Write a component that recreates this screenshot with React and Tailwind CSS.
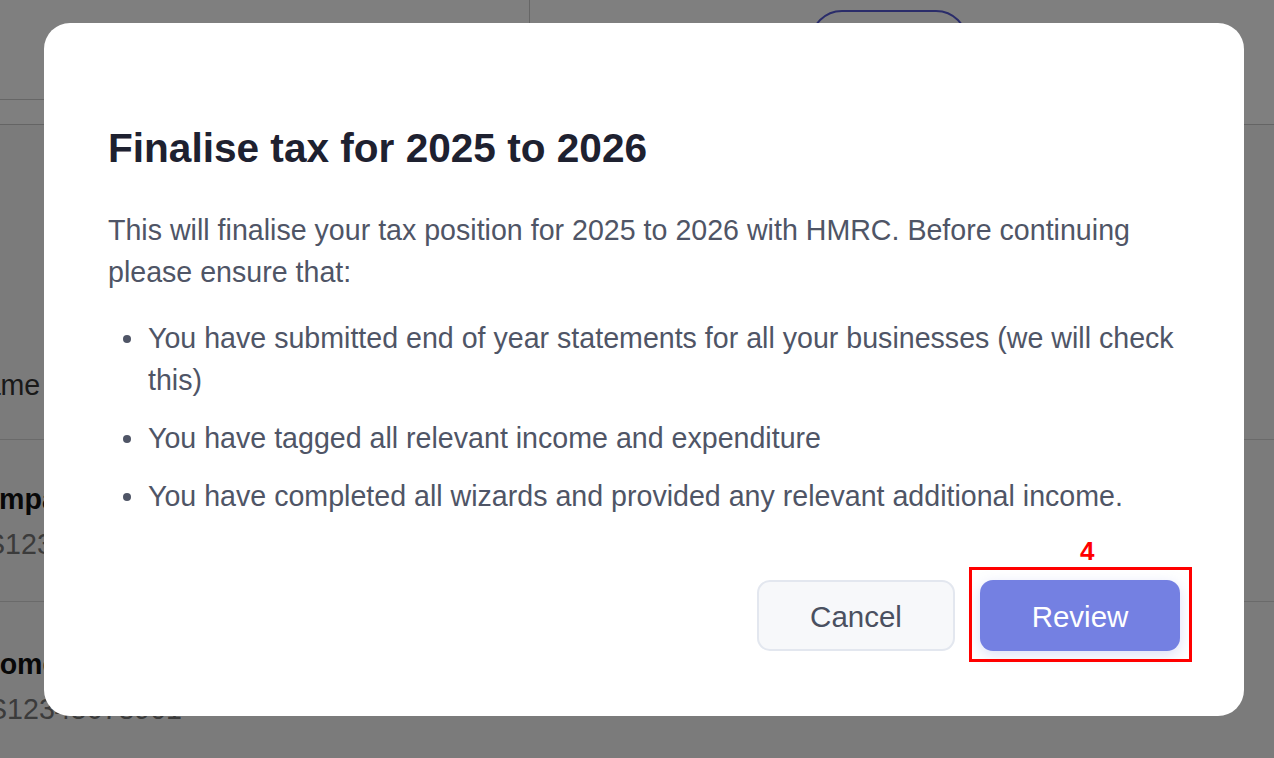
import React from "react";

const items = [
  "You have submitted end of year statements for all your businesses (we will check this)",
  "You have tagged all relevant income and expenditure",
  "You have completed all wizards and provided any relevant additional income.",
];

const App = () => {
  return (
    <div className="relative h-[758px] w-[1274px] overflow-hidden bg-[#f7f7f7] font-['Liberation_Sans',Arial,sans-serif]">
      {/* Page behind the dialog */}
      <div className="flex flex-col">
        <div className="flex h-[125px] flex-col border-b border-[#c9c9c9] bg-white">
          <div className="flex h-[100px]">
            <div className="w-[530px] border-r border-b border-[#cccccc]" />
            <div className="flex flex-1 items-start pt-[10px] pl-[280px]">
              <div className="h-[64px] w-[158px] rounded-[32px] border-2 border-[#5459d4]" />
            </div>
          </div>
        </div>
        <div className="flex h-[315px] items-end border-b border-[#d4d4d4] pb-[38px]">
          <span className="-ml-[36px] text-[28.6px] leading-[32px] text-[#333]">Name</span>
        </div>
        <div className="flex h-[162px] flex-col gap-[13px] border-b border-[#d4d4d4] pt-[43px]">
          <span className="-ml-[39px] text-[28.6px] leading-[32px] font-bold text-[#111]">Company Ltd</span>
          <span className="-ml-[14px] text-[28.6px] leading-[32px] text-[#777]">S12345678901</span>
        </div>
        <div className="flex flex-col gap-[13px] pt-[46px]">
          <span className="-ml-[21px] text-[28.6px] leading-[32px] font-bold text-[#111]">Home Services</span>
          <span className="-ml-[12px] text-[28.6px] leading-[32px] text-[#777]">S12345678901</span>
        </div>
      </div>

      {/* Overlay + dialog */}
      <div className="absolute inset-0 bg-black/50">
        <div className="ml-[44px] mt-[23px] flex h-[693px] w-[1200px] flex-col rounded-[26px] bg-white px-[64px] pt-[99px] pb-[65px]">
          <h2 className="text-[40.6px] leading-[52px] font-bold text-[#1e2130]">
            Finalise tax for 2025 to 2026
          </h2>
          <p className="mt-[35px] text-[28.6px] leading-[42px] text-[#4f5566]">
            This will finalise your tax position for 2025 to 2026 with HMRC. Before continuing please ensure that:
          </p>
          <ul className="mt-[24px] flex flex-col gap-[16px] pl-[40px] text-[28.6px] leading-[42px] text-[#4f5566]">
            {items.map((item) => (
              <li key={item} className="relative">
                <span className="absolute -left-[25px] top-[18px] h-[8px] w-[8px] rounded-full bg-[#4f5566]" />
                {item}
              </li>
            ))}
          </ul>
          <div className="mt-auto flex justify-end gap-[25px]">
            <button className="h-[71px] w-[198px] rounded-[13px] border-2 border-[#e3e7ef] bg-[#f7f8fa] pt-[4px] text-[29.5px] text-[#4a5060]">
              Cancel
            </button>
            <div className="relative">
              <button className="h-[71px] w-[200px] rounded-[13px] bg-[#7480e2] pt-[4px] text-[29.5px] text-white shadow-[0_4px_14px_rgba(116,128,226,0.25)]">
                Review
              </button>
              <div className="absolute -top-[13px] -left-[11px] -right-[12px] -bottom-[11px] border-[3px] border-[#ff0000]" />
              <span className="absolute -top-[44px] left-[100px] text-[26px] leading-[30px] font-bold text-[#ff0000]">
                4
              </span>
            </div>
          </div>
        </div>
      </div>
    </div>
  );
};

export default App;
